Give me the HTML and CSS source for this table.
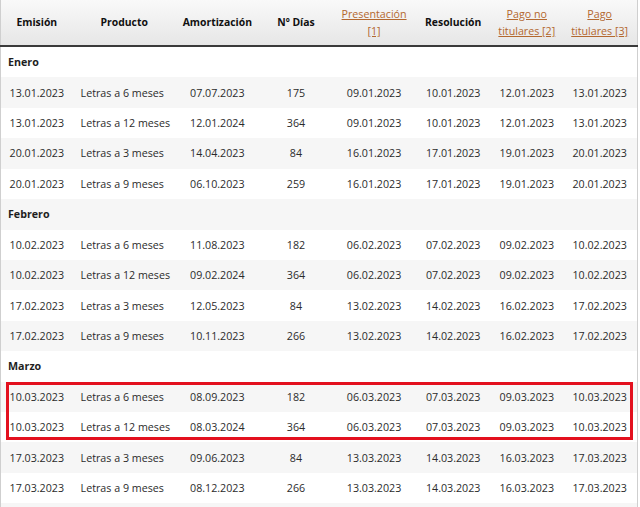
FILE: index.html
```html
<!DOCTYPE html>
<html lang="es">
<head>
<meta charset="utf-8">
<title>Calendario Letras</title>
<link rel="stylesheet" href="styles.css">
</head>
<body>
<div class="wrap">
<table class="cal">
<colgroup>
<col class="c1"><col class="c2"><col class="c3"><col class="c4"><col class="c5"><col class="c6"><col class="c7"><col class="c8">
</colgroup>
<thead>
<tr>
<th>Emisión</th>
<th>Producto</th>
<th>Amortización</th>
<th>Nº Días</th>
<th><a href="#n1" class="lnk">Presentación<br>[1]</a></th>
<th>Resolución</th>
<th><a href="#n2" class="lnk">Pago no<br>titulares [2]</a></th>
<th><a href="#n3" class="lnk">Pago<br>titulares [3]</a></th>
</tr>
</thead>
<tbody>
<tr class="grp"><td colspan="8">Enero</td></tr>
<tr><td>13.01.2023</td><td class="prod">Letras a 6 meses</td><td>07.07.2023</td><td>175</td><td>09.01.2023</td><td>10.01.2023</td><td>12.01.2023</td><td>13.01.2023</td></tr>
<tr><td>13.01.2023</td><td class="prod">Letras a 12 meses</td><td>12.01.2024</td><td>364</td><td>09.01.2023</td><td>10.01.2023</td><td>12.01.2023</td><td>13.01.2023</td></tr>
<tr><td>20.01.2023</td><td class="prod">Letras a 3 meses</td><td>14.04.2023</td><td>84</td><td>16.01.2023</td><td>17.01.2023</td><td>19.01.2023</td><td>20.01.2023</td></tr>
<tr><td>20.01.2023</td><td class="prod">Letras a 9 meses</td><td>06.10.2023</td><td>259</td><td>16.01.2023</td><td>17.01.2023</td><td>19.01.2023</td><td>20.01.2023</td></tr>
<tr class="grp"><td colspan="8">Febrero</td></tr>
<tr><td>10.02.2023</td><td class="prod">Letras a 6 meses</td><td>11.08.2023</td><td>182</td><td>06.02.2023</td><td>07.02.2023</td><td>09.02.2023</td><td>10.02.2023</td></tr>
<tr><td>10.02.2023</td><td class="prod">Letras a 12 meses</td><td>09.02.2024</td><td>364</td><td>06.02.2023</td><td>07.02.2023</td><td>09.02.2023</td><td>10.02.2023</td></tr>
<tr><td>17.02.2023</td><td class="prod">Letras a 3 meses</td><td>12.05.2023</td><td>84</td><td>13.02.2023</td><td>14.02.2023</td><td>16.02.2023</td><td>17.02.2023</td></tr>
<tr><td>17.02.2023</td><td class="prod">Letras a 9 meses</td><td>10.11.2023</td><td>266</td><td>13.02.2023</td><td>14.02.2023</td><td>16.02.2023</td><td>17.02.2023</td></tr>
<tr class="grp"><td colspan="8">Marzo</td></tr>
<tr><td>10.03.2023</td><td class="prod">Letras a 6 meses</td><td>08.09.2023</td><td>182</td><td>06.03.2023</td><td>07.03.2023</td><td>09.03.2023</td><td>10.03.2023</td></tr>
<tr><td>10.03.2023</td><td class="prod">Letras a 12 meses</td><td>08.03.2024</td><td>364</td><td>06.03.2023</td><td>07.03.2023</td><td>09.03.2023</td><td>10.03.2023</td></tr>
<tr><td>17.03.2023</td><td class="prod">Letras a 3 meses</td><td>09.06.2023</td><td>84</td><td>13.03.2023</td><td>14.03.2023</td><td>16.03.2023</td><td>17.03.2023</td></tr>
<tr><td>17.03.2023</td><td class="prod">Letras a 9 meses</td><td>08.12.2023</td><td>266</td><td>13.03.2023</td><td>14.03.2023</td><td>16.03.2023</td><td>17.03.2023</td></tr>
<tr class="tail"><td colspan="8"></td></tr>
</tbody>
</table>
<div class="mark"></div>
</div>
</body>
</html>
```

FILE: styles.css
```css
html, body {
  margin: 0;
  padding: 0;
  background: #ffffff;
}
.wrap {
  position: relative;
  width: 640px;
}
.cal {
  border-collapse: collapse;
  table-layout: fixed;
  width: 638px;
  font-family: "Open Sans", "Noto Sans", sans-serif;
  font-size: 10.7px;
  color: #2b2b2b;
  border-left: 1px solid #cfcfcf;
  border-right: 1px solid #cfcfcf;
}
.c1 { width: 72px; }
.c2 { width: 103px; }
.c3 { width: 83px; }
.c4 { width: 74px; }
.c5 { width: 82px; }
.c6 { width: 76px; }
.c7 { width: 71px; }
.c8 { width: 75px; }
.cal thead tr {
  background: linear-gradient(#f9f9f9, #e6e6e6);
}
.cal th {
  height: 45px;
  padding: 0 2px;
  font-size: 10.4px;
  font-weight: 700;
  color: #111111;
  line-height: 17px;
  text-align: center;
  vertical-align: middle;
  border-bottom: 2px solid #3a3a3a;
}
.lnk {
  font-size: 10.7px;
  font-weight: 400;
  color: #b3682f;
  text-decoration: underline;
}
.cal td {
  height: 30.43px;
  padding: 0;
  text-align: center;
  vertical-align: middle;
  white-space: nowrap;
}
.cal tbody tr:nth-child(even) {
  background: #f6f6f6;
}
.cal td.prod {
  text-align: left;
  padding-left: 8px;
}
.grp td {
  text-align: left;
  padding-left: 7px;
  font-weight: 700;
  color: #1e1e1e;
}
.mark {
  position: absolute;
  left: 6px;
  top: 382px;
  width: 621px;
  height: 52px;
  border: 3px solid #e3101e;
}
```
